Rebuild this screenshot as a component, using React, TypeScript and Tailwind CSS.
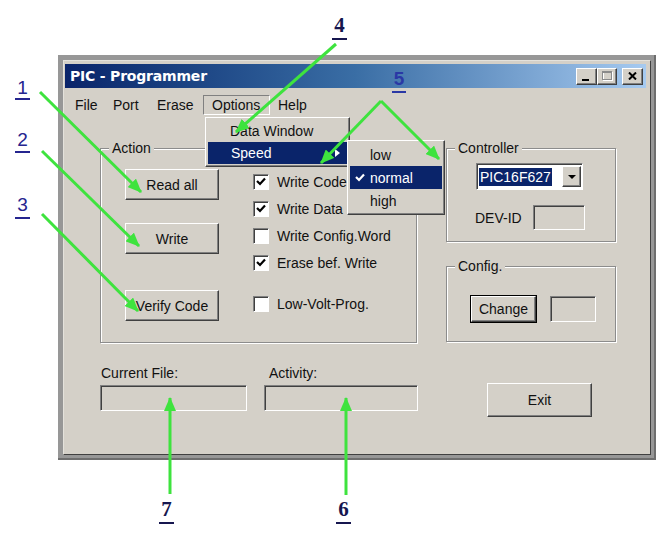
import React from "react";

const raised =
  "border border-t-white border-l-white border-r-[#404040] border-b-[#404040] shadow-[inset_-1px_-1px_0_#808080]";
const sunken =
  "border border-t-[#808080] border-l-[#808080] border-r-white border-b-white shadow-[inset_1px_1px_0_#404040]";

const Button = ({ label, className = "" }: { label: string; className?: string }) => (
  <div className={`flex items-center justify-center bg-[#d4d0c8] ${raised} ${className}`}>{label}</div>
);

const Group = ({
  title,
  className = "",
  children,
}: {
  title: string;
  className?: string;
  children?: React.ReactNode;
}) => (
  <div className={`relative border border-[#8c8c8c] shadow-[1px_1px_0_#fff,inset_1px_1px_0_#fff] ${className}`}>
    <span className="absolute left-[8px] -top-[9px] bg-[#d4d0c8] px-[3px] leading-[16px]">{title}</span>
    {children}
  </div>
);

const Check = ({ checked, label, className = "" }: { checked?: boolean; label: string; className?: string }) => (
  <div className={`flex items-center h-[27px] ${className}`}>
    <div className={`w-[16px] h-[16px] shrink-0 bg-white ${sunken} flex items-center justify-center`}>
      {checked && (
        <svg width="10" height="9" viewBox="0 0 10 9">
          <path d="M1 4 L4 7 L9 1.5" stroke="#000" strokeWidth="2.2" fill="none" />
        </svg>
      )}
    </div>
    <span className="ml-[8px] whitespace-nowrap">{label}</span>
  </div>
);

const Num = ({
  n,
  className,
}: {
  n: string;
  className: string;
}) => <div className={`absolute text-center border-b-2 ${className}`}>{n}</div>;

export default function App() {
  return (
    <div className="relative w-[666px] h-[536px] overflow-hidden bg-white pl-[58px] pt-[55px] font-['Liberation_Sans',Arial,sans-serif] text-[14px] leading-[16px] text-[#111]">
      {/* window frame */}
      <div className="w-[598px] h-[405px] bg-[#979797] p-[5px] shadow-[inset_-2px_-2px_0_#6e6e6e]">
        <div className="h-full bg-[#d4d0c8] border border-t-[#e4e2dc] border-l-[#e4e2dc] border-r-[#404040] border-b-[#404040] pt-[3px] pl-[1px] pr-[4px]">
          {/* title bar */}
          <div className="h-[24px] flex items-center justify-between pl-[5px] pr-[3px] bg-linear-to-r from-[#0a246a] via-[#3a6ea5] to-[#a6caf0]">
            <span className="font-['DejaVu_Sans',sans-serif] font-bold text-[14px] text-white tracking-[-0.2px]">
              PIC - Programmer
            </span>
            <div className="flex items-center">
              <div className={`w-[21px] h-[17px] bg-[#d4d0c8] ${raised} flex items-end justify-center pb-[3px]`}>
                <div className="w-[7px] h-[2px] bg-black -ml-[3px]" />
              </div>
              <div className={`w-[20px] h-[17px] bg-[#d4d0c8] ${raised} flex items-center justify-center`}>
                <svg width="11" height="10" viewBox="0 0 11 10">
                  <rect x="1.5" y="1.5" width="9" height="8" fill="none" stroke="#fff" />
                  <rect x="0.5" y="0.5" width="9" height="8" fill="none" stroke="#8a8a8a" />
                  <line x1="0.5" y1="1.5" x2="9.5" y2="1.5" stroke="#8a8a8a" />
                </svg>
              </div>
              <div className={`w-[21px] h-[17px] ml-[5px] bg-[#d4d0c8] ${raised} flex items-center justify-center`}>
                <svg width="9" height="8" viewBox="0 0 9 8">
                  <path d="M1 0.5 L8 7.5 M8 0.5 L1 7.5" stroke="#000" strokeWidth="2" />
                </svg>
              </div>
            </div>
          </div>

          {/* menu bar */}
          <div className="mt-[7px] h-[20px] flex items-center pl-[10px]">
            <span className="w-[38px]">File</span>
            <span className="w-[44px]">Port</span>
            <span className="w-[46px]">Erase</span>
            <span className={`w-[67px] h-[20px] pl-[8px] flex items-center ${sunken} shadow-none`}>Options</span>
            <span className="ml-[8px]">Help</span>
          </div>

          {/* main body */}
          <div className="flex mt-[33px] pl-[35px]">
            <Group title="Action" className="w-[317px] h-[195px]">
              <div className="flex pl-[24px] pt-[20px]">
                <div className="flex flex-col w-[94px]">
                  <Button label="Read all" className="h-[31px]" />
                  <Button label="Write" className="h-[31px] mt-[23px]" />
                  <Button label="Verify Code" className="h-[31px] mt-[36px]" />
                </div>
                <div className="flex flex-col ml-[34px] -mt-[1px]">
                  <Check checked label="Write Code" />
                  <Check checked label="Write Data" />
                  <Check label="Write Config.Word" />
                  <Check checked label="Erase bef. Write" />
                  <Check label="Low-Volt-Prog." className="mt-[14px]" />
                </div>
              </div>
            </Group>

            <div className="flex flex-col ml-[29px]">
              <Group title="Controller" className="w-[170px] h-[94px]">
                <div className="pl-[29px] pt-[14px]">
                  <div className={`w-[107px] h-[27px] bg-white ${sunken} flex items-center pl-[2px] pr-[1px]`}>
                    <span className="bg-[#0a246a] text-white px-[1px] leading-[18px]">PIC16F627</span>
                    <div className={`ml-auto w-[19px] h-[21px] bg-[#d4d0c8] ${raised} flex items-center justify-center`}>
                      <svg width="8" height="4" viewBox="0 0 8 4">
                        <path d="M0 0 H8 L4 4 Z" fill="#000" />
                      </svg>
                    </div>
                  </div>
                  <div className="flex items-center mt-[15px] h-[25px]">
                    <span className="w-[58px] -ml-[1px]">DEV-ID</span>
                    <div className={`w-[52px] h-[25px] ${sunken}`} />
                  </div>
                </div>
              </Group>
              <Group title="Config." className="w-[170px] h-[76px] mt-[24px]">
                <div className="flex items-start pl-[23px] pt-[28px]">
                  <div className="w-[67px] h-[28px] border border-black">
                    <Button label="Change" className="h-full" />
                  </div>
                  <div className={`w-[46px] h-[26px] ml-[13px] mt-[1px] ${sunken}`} />
                </div>
              </Group>
            </div>
          </div>

          {/* bottom row */}
          <div className="flex mt-[22px] pl-[35px]">
            <div className="w-[147px]">
              <div className="pl-[1px]">Current File:</div>
              <div className={`h-[26px] mt-[4px] ${sunken}`} />
            </div>
            <div className="w-[154px] ml-[17px]">
              <div className="pl-[5px]">Activity:</div>
              <div className={`h-[26px] mt-[4px] ${sunken}`} />
            </div>
            <Button label="Exit" className="w-[105px] h-[34px] ml-[69px] mt-[18px]" />
          </div>
        </div>
      </div>

      {/* Options menu */}
      <div className={`absolute left-[205px] top-[117px] w-[145px] bg-[#d4d0c8] ${raised} p-[2px]`}>
        <div className="h-[22px] pl-[22px] flex items-center">Data Window</div>
        <div className="h-[22px] pl-[23px] pr-[7px] flex items-center justify-between bg-[#0a246a] text-white">
          <span>Speed</span>
          <svg width="5" height="8" viewBox="0 0 5 8">
            <path d="M0 0 L5 4 L0 8 Z" fill="#fff" />
          </svg>
        </div>
      </div>

      {/* Speed submenu */}
      <div className={`absolute left-[347px] top-[140px] w-[98px] bg-[#d4d0c8] ${raised} p-[2px]`}>
        <div className="h-[23px] pl-[20px] flex items-center">low</div>
        <div className="h-[23px] flex items-center bg-[#0a246a] text-white">
          <div className="w-[20px] flex justify-center">
            <svg width="10" height="9" viewBox="0 0 10 9">
              <path d="M1 4 L4 7 L9 1.5" stroke="#fff" strokeWidth="2.2" fill="none" />
            </svg>
          </div>
          <span>normal</span>
        </div>
        <div className="h-[23px] pl-[20px] flex items-center">high</div>
      </div>

      {/* annotation numbers */}
      <Num n="1" className="left-[15px] top-[79px] w-[15px] text-[19px] leading-[18px] pb-[1px] text-[#25258f] border-[#25258f]" />
      <Num n="2" className="left-[15px] top-[131px] w-[15px] text-[19px] leading-[18px] pb-[2px] text-[#25258f] border-[#25258f]" />
      <Num n="3" className="left-[15px] top-[196px] w-[15px] text-[19px] leading-[18px] pb-[3px] text-[#25258f] border-[#25258f]" />
      <Num
        n="4"
        className="left-[332px] top-[15px] w-[15px] font-['Liberation_Serif',serif] font-bold text-[21px] leading-[21px] pb-[2px] text-[#16164f] border-[#16164f]"
      />
      <Num
        n="5"
        className="left-[392px] top-[70px] w-[14px] font-bold text-[19px] leading-[18px] pb-[3px] text-[#2a38a5] border-[#2a38a5]"
      />
      <Num
        n="7"
        className="left-[159px] top-[499px] w-[15px] font-['Liberation_Serif',serif] font-bold text-[21px] leading-[21px] pb-[2px] text-[#16164f] border-[#16164f]"
      />
      <Num
        n="6"
        className="left-[336px] top-[499px] w-[15px] font-['Liberation_Serif',serif] font-bold text-[21px] leading-[21px] pb-[2px] text-[#16164f] border-[#16164f]"
      />

      {/* green arrows */}
      <svg className="absolute inset-0 pointer-events-none" width="666" height="536" viewBox="0 0 666 536">
        <defs>
          <marker id="ah" markerUnits="userSpaceOnUse" markerWidth="14" markerHeight="12" refX="13" refY="6" orient="auto">
            <path d="M0 0 L14 6 L0 12 Z" fill="#3ee33e" />
          </marker>
        </defs>
        <g stroke="#3ee33e" strokeWidth="3" fill="none" markerEnd="url(#ah)">
          <line x1="40" y1="92" x2="141" y2="192" />
          <line x1="42" y1="151" x2="139" y2="246" />
          <line x1="42" y1="214" x2="138" y2="311" />
          <line x1="336" y1="44" x2="236" y2="132" />
          <line x1="381" y1="101" x2="321" y2="163" />
          <line x1="381" y1="101" x2="439" y2="159" />
          <line x1="170" y1="494" x2="170" y2="398" />
          <line x1="346" y1="495" x2="346" y2="398" />
        </g>
      </svg>
    </div>
  );
}
